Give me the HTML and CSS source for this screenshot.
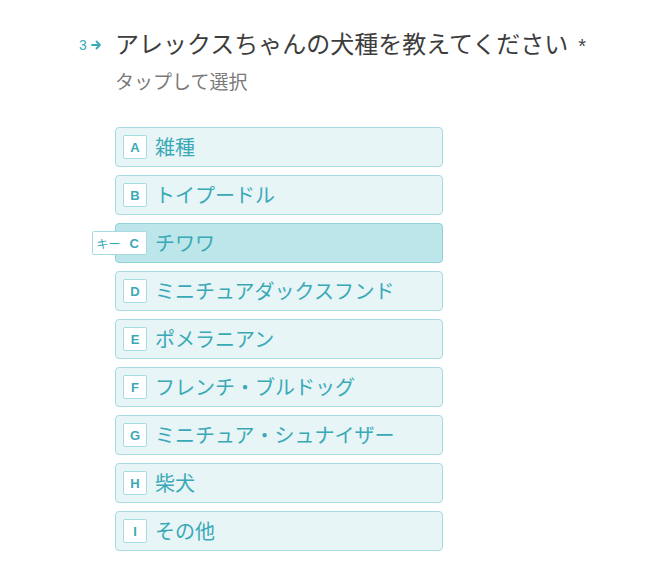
FILE: index.html
```html
<!DOCTYPE html>
<html lang="ja">
<head>
<meta charset="utf-8">
<link rel="stylesheet" href="styles.css">
</head>
<body>
<div class="page">
  <div class="question">
    <div class="qnum">3<svg class="arrow" width="11" height="10" viewBox="0 0 11 10"><path d="M1 5H9M5.5 1.5L9 5L5.5 8.5" fill="none" stroke="currentColor" stroke-width="1.8" stroke-linecap="round" stroke-linejoin="round"/></svg></div>
    <h1 class="title">アレックスちゃんの犬種を教えてください<span class="req">*</span></h1>
  </div>
  <p class="subtitle">タップして選択</p>
  <ul class="options">
    <li class="option"><span class="key">A</span><span class="label">雑種</span></li>
    <li class="option"><span class="key">B</span><span class="label">トイプードル</span></li>
    <li class="option selected"><span class="key wide"><span class="hint">キー</span>C</span><span class="label">チワワ</span></li>
    <li class="option"><span class="key">D</span><span class="label">ミニチュアダックスフンド</span></li>
    <li class="option"><span class="key">E</span><span class="label">ポメラニアン</span></li>
    <li class="option"><span class="key">F</span><span class="label">フレンチ・ブルドッグ</span></li>
    <li class="option"><span class="key">G</span><span class="label">ミニチュア・シュナイザー</span></li>
    <li class="option"><span class="key">H</span><span class="label">柴犬</span></li>
    <li class="option"><span class="key">I</span><span class="label">その他</span></li>
  </ul>
</div>
</body>
</html>
```
FILE: styles.css
```css
html, body {
  margin: 0;
  padding: 0;
  background: #ffffff;
}
body {
  font-family: "Noto Sans CJK JP", "Noto Sans", sans-serif;
}
.page {
  padding: 27px 0 0 115px;
}
.question {
  display: flex;
  align-items: center;
  margin-left: -36px;
}
.qnum {
  width: 36px;
  display: flex;
  align-items: center;
  gap: 4px;
  font-family: "Liberation Sans", sans-serif;
  font-size: 14px;
  color: #3aa9b6;
  line-height: 32px;
}
.arrow {
  display: block;
  margin-top: 1px;
}
.title {
  margin: 0;
  font-size: 24px;
  font-weight: 400;
  line-height: 32px;
  color: #3d3d3d;
}
.req {
  margin-left: 10px;
  font-family: "Liberation Sans", sans-serif;
  font-size: 20px;
  color: #4a4a4a;
}
.subtitle {
  margin: 5px 0 0 0;
  font-size: 19px;
  line-height: 28px;
  color: #7a7a7a;
}
.options {
  list-style: none;
  margin: 32px 0 0 0;
  padding: 0;
  display: flex;
  flex-direction: column;
  gap: 8px;
}
.option {
  box-sizing: border-box;
  width: 328px;
  height: 40px;
  display: flex;
  align-items: center;
  gap: 8px;
  padding-left: 7px;
  background: #e7f5f7;
  border: 1px solid #a6dce1;
  border-radius: 4px;
  color: #3aa9b6;
}
.option.selected {
  background: #bce6e9;
  border-color: #8fd2d9;
}
.key {
  box-sizing: border-box;
  width: 24px;
  height: 24px;
  display: flex;
  align-items: center;
  justify-content: center;
  background: #ffffff;
  border: 1px solid #a6dce1;
  border-radius: 2px;
  font-family: "Liberation Sans", "Noto Sans", sans-serif;
  font-size: 13px;
  font-weight: 700;
  color: #3aa9b6;
}
.key.wide {
  width: 55px;
  margin-left: -31px;
  justify-content: flex-end;
  padding-right: 7px;
  gap: 9px;
}
.hint {
  font-family: "Noto Sans CJK JP", sans-serif;
  font-size: 12px;
  font-weight: 400;
}
.label {
  font-size: 20px;
  line-height: 28px;
}
```
